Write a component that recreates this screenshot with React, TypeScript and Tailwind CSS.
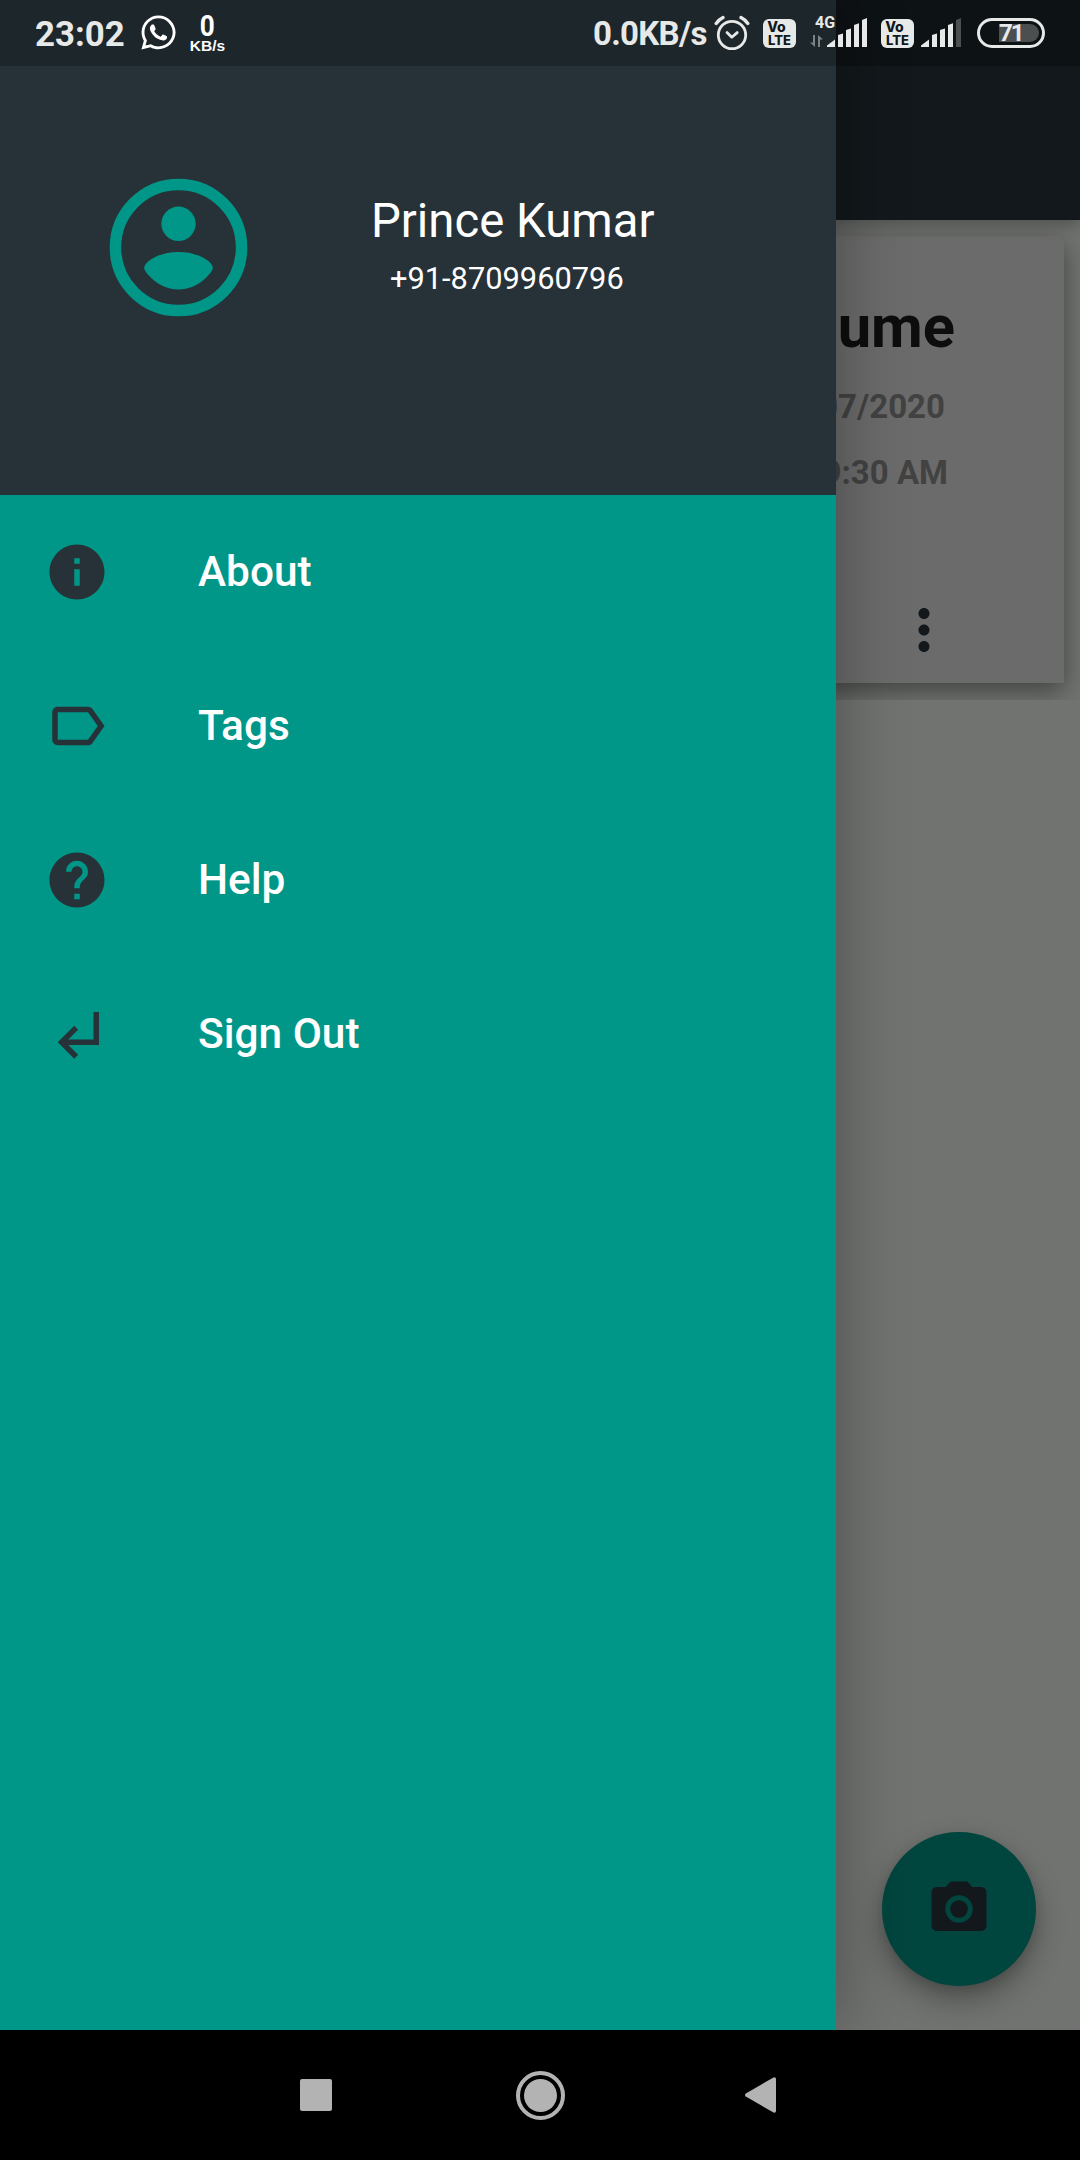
import type { ReactNode } from "react";
import {
  MdHelp,
  MdInfo,
  MdLabelOutline,
  MdMoreVert,
  MdPhotoCamera,
  MdSubdirectoryArrowLeft,
} from "react-icons/md";
import { FaWhatsapp } from "react-icons/fa";

function AccountIcon() {
  return (
    <svg viewBox="0 0 24 24" className="size-[165px] shrink-0" fill="#009688">
      <circle cx="12" cy="12" r="9.17" fill="none" stroke="#009688" strokeWidth="1.67" />
      <circle cx="12" cy="8.55" r="2.5" />
      <path d="M7 15c.1-1.1 2.3-2.35 5-2.35S16.9 13.9 17 15c0 .45-2 3.1-5 3.1S7 15.45 7 15z" />
    </svg>
  );
}

function AlarmIcon() {
  return (
    <svg viewBox="0 0 36 36" className="size-9" fill="none" stroke="#e7e9e9" strokeLinecap="round">
      <circle cx="18" cy="20" r="13.7" strokeWidth="2.8" />
      <path d="M2.200 8.400C4 6 6.300 4 9 2.600M33.800 8.400C32 6 29.700 4 27 2.600" strokeWidth="3.4" />
      <path d="M13 17.600l4.800 4.600 5.400-4.600" strokeWidth="2.8" strokeLinejoin="round" />
    </svg>
  );
}

function VolteBadge() {
  return (
    <div className="flex h-[29px] w-[33px] flex-col items-center rounded-[6px] bg-[#e7e9e9] pt-[2px] text-[14px] font-extrabold leading-[12.500px] text-[#12181b] [font-family:Inter,Roboto,sans-serif]">
      <span className="mr-[6px]">Vo</span>
      <span className="text-[13px]">LTE</span>
    </div>
  );
}

function Signal({ weak = false }: { weak?: boolean }) {
  return (
    <svg viewBox="0 0 40 29" className="h-[29px] w-10" fill="#e7e9e9">
      <path d="M0 29v-1.500L8 21.500V29z" />
      <path d="M11 29V17l5-1.500V29z" />
      <path d="M19 29V12l5-1.500V29z" />
      <path d="M27 29V7l5-1.800V29z" />
      <path d="M35 29V2l5-2v29z" fill={weak ? "#4c4f50" : "#e7e9e9"} />
    </svg>
  );
}

function StatusBar() {
  return (
    <header className="absolute inset-x-0 top-0 flex h-[66px] items-start bg-black/24 text-[#e7e9e9]">
      <span className="ml-[35px] mt-[14px] w-[104px] text-[34.800px] font-bold leading-10">23:02</span>
      <FaWhatsapp className="mt-[13px] size-[39px] text-white" />
      <div className="ml-[11px] mt-[14px] flex w-[37px] flex-col items-center text-white">
        <span className="scale-x-90 text-[29px] font-bold leading-6">0</span>
        <span className="text-[15.500px] font-bold leading-[15px] [font-family:'Liberation_Sans',sans-serif]">KB/s</span>
      </div>
      <span className="ml-[367px] mt-[14px] w-[121px] text-[33px] font-bold leading-10 tracking-[-0.700px]">0.0KB/s</span>
      <div className="mt-[15px]"><AlarmIcon /></div>
      <div className="ml-[13px] mt-[19px]"><VolteBadge /></div>
      <div className="relative ml-[31px] mt-[18px]">
        <Signal />
        <span className="absolute -left-[12px] -top-[4px] text-[16px] font-bold leading-[18px]">4G</span>
        <svg viewBox="0 0 13 12" className="absolute -left-[17px] top-[17px] h-3 w-[13px]" fill="#7c8285">
          <path d="M3 0h2v12L0 7.500h3zM8 12V0l5 4.500h-3V12z" />
        </svg>
      </div>
      <div className="ml-[14px] mt-[19px]"><VolteBadge /></div>
      <div className="ml-[7px] mt-[18px]"><Signal weak /></div>
      <div className="ml-[16px] mt-[18px] flex h-[30px] w-[68px] items-center justify-end rounded-full border-[3px] border-[#e7e9e9] pr-[3px]">
        <div className="flex h-[18px] w-10 items-center rounded-r-full bg-[#4c4f50]">
          <span className="text-[24px] font-bold leading-none tracking-[-2px]">71</span>
        </div>
      </div>
    </header>
  );
}

function DocumentsScreen() {
  return (
    <div className="flex h-full flex-col bg-[#70736f]">
      <div className="z-10 h-[220px] shrink-0 bg-[#12181b] shadow-[0_5px_14px_rgba(0,0,0,0.28)]" />
      <section className="h-[480px] overflow-hidden px-4 pt-4">
        <div className="flex h-[447px] flex-col items-end rounded-t-[8px] bg-[#6b6b6b] font-bold shadow-[0_8px_26px_rgba(0,0,0,0.42)]">
          <h1 className="mr-[109px] mt-[56px] text-[59.700px] leading-[70px] text-[#0d0d0d]">Resume</h1>
          <p className="mr-[119px] mt-[25px] text-[33px] leading-10 text-[#424242]">07/2020</p>
          <p className="mr-[116px] mt-[26px] text-[33px] leading-10 text-[#424242]">09:30 AM</p>
          <MdMoreVert className="mr-[107px] mt-[104px] size-[66px] text-[#12181b]" />
        </div>
      </section>
      <button className="mb-[44px] mr-[44px] mt-auto flex size-[154px] items-center justify-center self-end rounded-full bg-[#00453e] text-[#12181b] shadow-[0_14px_30px_rgba(0,0,0,0.3),0_4px_12px_rgba(0,0,0,0.12)]">
        <MdPhotoCamera className="size-[66px]" />
      </button>
    </div>
  );
}

function MenuItem({ icon, label }: { icon: ReactNode; label: string }) {
  return (
    <li className="flex h-[154px] items-center gap-[88px] px-11 text-[66px] text-[#273238]">
      {icon}
      <span className="text-[42.400px] font-medium leading-none text-white">{label}</span>
    </li>
  );
}

function Drawer() {
  return (
    <aside className="absolute inset-y-0 left-0 w-[836px] bg-[#009688] shadow-[0_0_66px_rgba(0,0,0,0.32)]">
      <div className="flex h-[495px] items-start bg-[#273238] pl-24 pt-[165px] text-white">
        <AccountIcon />
        <div className="ml-[110px] mt-7">
          <h2 className="text-[47.300px] leading-[56px]">Prince Kumar</h2>
          <p className="ml-[19px] mt-3 text-[30.800px] leading-9">+91-8709960796</p>
        </div>
      </div>
      <ul>
        <MenuItem icon={<MdInfo />} label="About" />
        <MenuItem icon={<MdLabelOutline />} label="Tags" />
        <MenuItem icon={<MdHelp />} label="Help" />
        <MenuItem icon={<MdSubdirectoryArrowLeft />} label="Sign Out" />
      </ul>
    </aside>
  );
}

function NavigationBar() {
  return (
    <nav className="flex h-[130px] items-center bg-black">
      <div className="ml-[300px] size-8 rounded-[2px] bg-[#b3b3b3]" />
      <div className="ml-[184px] flex size-[49px] items-center justify-center rounded-full border-4 border-[#b3b3b3]">
        <div className="size-[33px] shrink-0 rounded-full bg-[#b3b3b3]" />
      </div>
      <svg viewBox="0 0 31 36" className="ml-[180px] h-9 w-[31px]" fill="#b3b3b3">
        <path d="M.8 16.500L28.500.4Q31 0 31 2v32q0 2-2.500 1.600L.8 19.500q-1.600-1.500 0-3z" />
      </svg>
    </nav>
  );
}

export default function App() {
  return (
    <div className="h-[2160px] w-[1080px] overflow-hidden bg-black [font-family:Roboto,sans-serif]">
      <main className="relative isolate h-[2030px] overflow-hidden">
        <div className="isolate h-full"><DocumentsScreen /></div>
        <Drawer />
        <StatusBar />
      </main>
      <NavigationBar />
    </div>
  );
}
